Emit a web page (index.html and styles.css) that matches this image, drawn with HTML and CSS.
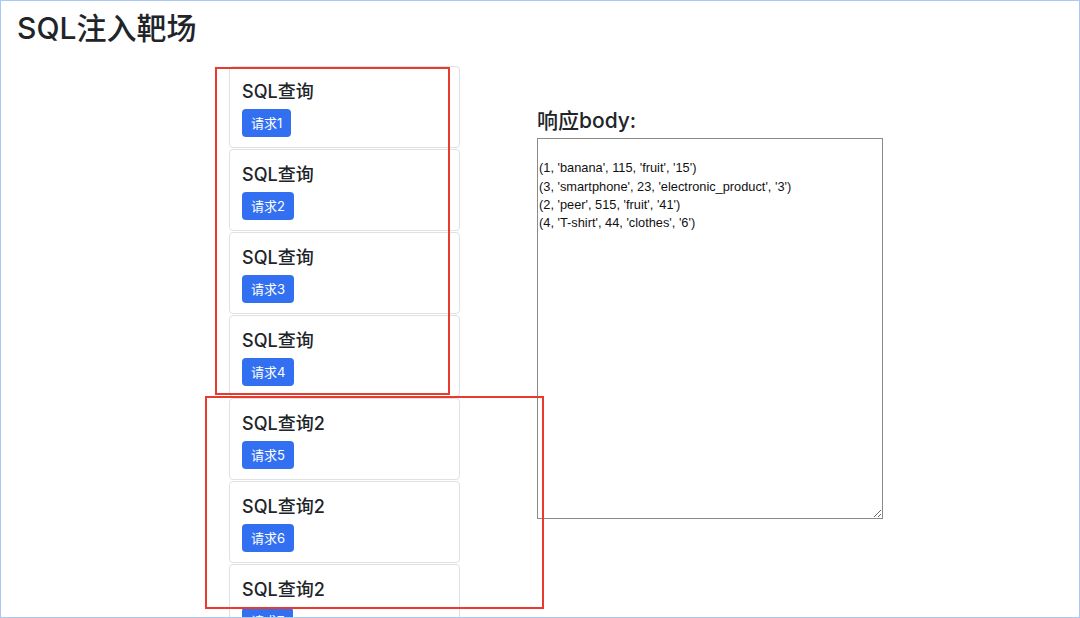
FILE: index.html
```html
<!DOCTYPE html>
<html lang="zh-CN">
<head>
  <meta charset="UTF-8" />
  <title>SQL注入靶场</title>
  <link rel="stylesheet" href="styles.css">
</head>
<body>
  <div class="frame">
    <h1 class="page-title">SQL注入靶场</h1>

    <div class="main">
      <div class="queries">
        <div class="card">
          <h3>SQL查询</h3>
          <button class="btn">请求1</button>
        </div>
        <div class="card">
          <h3>SQL查询</h3>
          <button class="btn">请求2</button>
        </div>
        <div class="card">
          <h3>SQL查询</h3>
          <button class="btn">请求3</button>
        </div>
        <div class="card">
          <h3>SQL查询</h3>
          <button class="btn">请求4</button>
        </div>
        <div class="card">
          <h3>SQL查询2</h3>
          <button class="btn">请求5</button>
        </div>
        <div class="card">
          <h3>SQL查询2</h3>
          <button class="btn">请求6</button>
        </div>
        <div class="card">
          <h3>SQL查询2</h3>
          <button class="btn">请求7</button>
        </div>
      </div>

      <div class="response">
        <h3>响应body:</h3>
        <textarea class="response-body">

(1, 'banana', 115, 'fruit', '15')
(3, 'smartphone', 23, 'electronic_product', '3')
(2, 'peer', 515, 'fruit', '41')
(4, 'T-shirt', 44, 'clothes', '6')</textarea>
      </div>
    </div>

    <!-- annotation boxes drawn over the screenshot -->
    <div class="mark mark-one"></div>
    <div class="mark mark-two"></div>
  </div>
</body>
</html>
```

FILE: styles.css
```css
html, body {
  margin: 0;
  background: #fff;
}
body {
  font-family: Inter, "Noto Sans CJK SC", sans-serif;
  color: #212529;
}
.frame {
  position: relative;
  width: 1080px;
  height: 618px;
  box-sizing: border-box;
  border: 1px solid #a9c9f3;
  overflow: hidden;
}
.page-title {
  margin: 0;
  padding: 9px 0 0 16px;
  font-size: 30px;
  font-weight: 500;
  line-height: 36px;
}
.main {
  display: flex;
  gap: 77px;
  margin: 20px 0 0 228px;
}
.queries {
  width: 231px;
  flex-shrink: 0;
}
.card {
  border: 1px solid #dfe1e4;
  border-radius: 4px;
  padding: 13px 12px 10px;
  margin-bottom: 1px;
}
.card h3 {
  margin: 0 0 6px;
  font-size: 18px;
  font-weight: 500;
  line-height: 23px;
}
.btn {
  display: block;
  border: none;
  border-radius: 4px;
  background: #3270f1;
  color: #fff;
  font-family: inherit;
  font-size: 13px;
  line-height: 20px;
  padding: 4px 9px;
}
.response {
  padding-top: 42px;
}
.response h3 {
  margin: 0 0 5px;
  font-size: 21px;
  font-weight: 500;
  line-height: 25px;
}
.response-body {
  display: block;
  width: 346px;
  height: 381px;
  box-sizing: border-box;
  margin: 0;
  padding: 2px 1px;
  border: 1px solid #8a8a8a;
  font-family: "Liberation Sans", "Noto Sans CJK SC", sans-serif;
  font-size: 12.8px;
  line-height: 18.3px;
  color: #111;
}
.mark {
  position: absolute;
  border: 2px solid #e93b2d;
  pointer-events: none;
}
.mark-one {
  left: 214px;
  top: 66px;
  width: 231px;
  height: 324px;
}
.mark-two {
  left: 204px;
  top: 395px;
  width: 335px;
  height: 209px;
}
```
